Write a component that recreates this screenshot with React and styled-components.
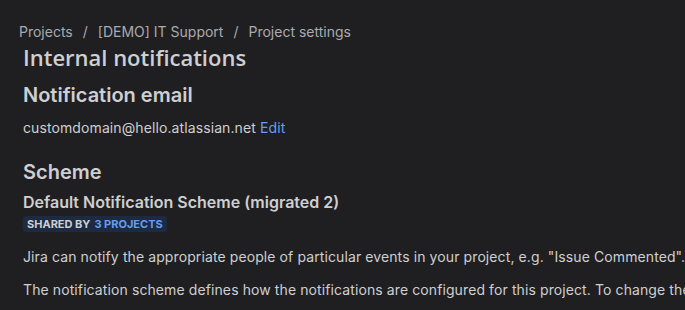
import React from "react";
import styled, { createGlobalStyle } from "styled-components";

const Global = createGlobalStyle`
  html, body { margin: 0; padding: 0; background: #1f1f21; }
  body { font-family: Inter, "Noto Sans", sans-serif; color: #cecfd2; }
`;

const Page = styled.div`
  width: 685px;
  height: 310px;
  overflow: hidden;
  box-sizing: border-box;
  padding: 22px 0 0 19px;
  background: #1f1f21;
  white-space: nowrap;
`;

const Breadcrumbs = styled.nav`
  display: flex;
  align-items: center;
  gap: 10px;
  font-size: 14px;
  line-height: 20px;
  color: #a9abaf;
`;

const Sep = styled.span`
  color: #a9abaf;
`;

const Content = styled.div`
  padding-left: 4px;
`;

const Title = styled.h1`
  margin: 1px 0 0;
  font-family: "Open Sans", "Noto Sans", sans-serif;
  font-size: 22px;
  line-height: 28px;
  font-weight: 600;
  color: #cecfd2;
`;

const SectionTitle = styled.h2`
  margin: ${(p) => p.$top}px 0 0;
  font-size: 20px;
  line-height: 24px;
  font-weight: 600;
  color: #cecfd2;
`;

const Text = styled.p`
  margin: ${(p) => p.$top}px 0 0;
  font-size: 14px;
  line-height: 20px;
  letter-spacing: 0.1px;
  color: #cecfd2;
`;

const Link = styled.a`
  color: #669df1;
  text-decoration: none;
`;

const SchemeName = styled.h3`
  margin: 8px 0 0;
  font-size: 16px;
  line-height: 20px;
  font-weight: 600;
  color: #cecfd2;
`;

const Lozenge = styled.span`
  display: inline-flex;
  gap: 4px;
  margin-top: 1px;
  padding: 0 4px;
  border-radius: 3px;
  background: #1c2b42;
  font-size: 11px;
  line-height: 16px;
  font-weight: 700;
  text-transform: uppercase;
  color: #cecfd2;
`;

const LozengeCount = styled.span`
  color: #669df1;
`;

export default function App() {
  return (
    <Page>
      <Global />
      <Breadcrumbs>
        <span>Projects</span>
        <Sep>/</Sep>
        <span>[DEMO] IT Support</span>
        <Sep>/</Sep>
        <span>Project settings</span>
      </Breadcrumbs>
      <Content>
        <Title>Internal notifications</Title>
        <SectionTitle $top={12}>Notification email</SectionTitle>
        <Text $top={11}>
          customdomain@hello.atlassian.net <Link href="#">Edit</Link>
        </Text>
        <SectionTitle $top={22}>Scheme</SectionTitle>
        <SchemeName>Default Notification Scheme (migrated 2)</SchemeName>
        <Lozenge>
          Shared by <LozengeCount>3 projects</LozengeCount>
        </Lozenge>
        <Text $top={15}>
          Jira can notify the appropriate people of particular events in your project, e.g. "Issue Commented". You can choose specific people, groups, or roles to receive notifications.
        </Text>
        <Text $top={13}>
          The notification scheme defines how the notifications are configured for this project. To change the notifications, you can select a different notification scheme.
        </Text>
      </Content>
    </Page>
  );
}
